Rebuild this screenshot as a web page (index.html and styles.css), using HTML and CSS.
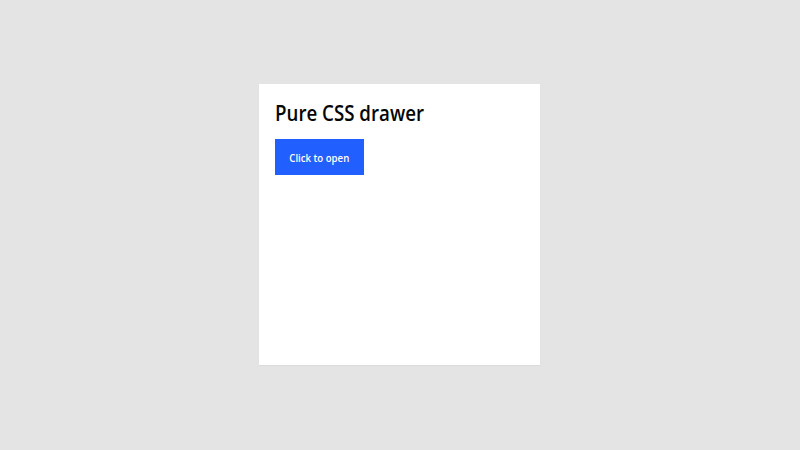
FILE: index.html
```html
<!DOCTYPE html>
<html>
<head>
<meta charset="utf-8">
<link rel="stylesheet" href="styles.css">
</head>
<body>
<main class="card">
  <h1 class="title"><span class="narrow">Pure CSS drawer</span></h1>
  <button class="open-btn"><span class="narrow">Click to open</span></button>
</main>
</body>
</html>
```
FILE: styles.css
```css
html, body {
  margin: 0;
  height: 100%;
}
body {
  box-sizing: border-box;
  background: #e4e4e4;
  display: flex;
  align-items: center;
  justify-content: center;
  padding: 0 1px 1px 0;
  font-family: "Open Sans", "Noto Sans", sans-serif;
}
.card {
  box-sizing: border-box;
  width: 281px;
  height: 281px;
  background: #fff;
  padding: 16px;
  display: flex;
  flex-direction: column;
  align-items: flex-start;
  box-shadow: 0 1px 1px rgba(0, 0, 0, 0.04);
}
.narrow {
  display: inline-block;
  transform: scaleX(0.875);
}
.title {
  margin: 0 0 15px;
  font-size: 22px;
  font-weight: 600;
  line-height: 24px;
  color: #050505;
  white-space: nowrap;
}
.title .narrow {
  transform: scaleX(0.85);
  transform-origin: left center;
}
.open-btn {
  width: 89px;
  height: 36px;
  border: 0;
  background: #2160ff;
  color: #fff;
  font-family: inherit;
  font-size: 11px;
  font-weight: 600;
  padding: 0;
  display: flex;
  align-items: center;
  justify-content: center;
  white-space: nowrap;
}
```
